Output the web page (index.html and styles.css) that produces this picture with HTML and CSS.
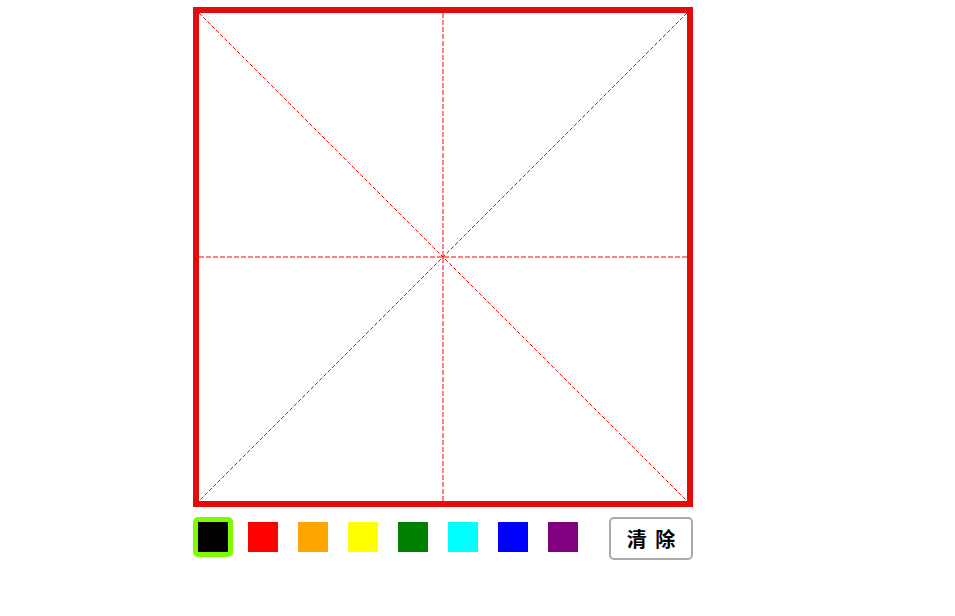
FILE: index.html
```html
<!DOCTYPE html>
<html lang="zh">
<head>
<meta charset="utf-8">
<title>田字格</title>
<link rel="stylesheet" href="styles.css">
</head>
<body>
<div class="app">
  <div class="board">
    <svg class="grid" width="488" height="488" viewBox="0 0 488 488">
      <line x1="0" y1="0" x2="488" y2="488" class="diag"/>
      <line x1="488" y1="0" x2="0" y2="488" class="diag"/>
      <line x1="0" y1="244" x2="488" y2="244" class="mid"/>
      <line x1="244" y1="0" x2="244" y2="488" class="mid"/>
    </svg>
  </div>
  <div class="toolbar">
    <div class="swatches">
      <span class="swatch active"><i class="c-black"></i></span>
      <span class="swatch"><i class="c-red"></i></span>
      <span class="swatch"><i class="c-orange"></i></span>
      <span class="swatch"><i class="c-yellow"></i></span>
      <span class="swatch"><i class="c-green"></i></span>
      <span class="swatch"><i class="c-cyan"></i></span>
      <span class="swatch"><i class="c-blue"></i></span>
      <span class="swatch"><i class="c-purple"></i></span>
    </div>
    <button class="clear">清 除</button>
  </div>
</div>
</body>
</html>
```
FILE: styles.css
```css
html, body {
  margin: 0;
  padding: 0;
  background: #fff;
}
.app {
  padding: 7px 0 0 193px;
  font-family: "Noto Sans CJK SC", "Noto Sans", sans-serif;
}
.board {
  width: 488px;
  height: 488px;
  border: 6px solid #e60b0b;
}
.grid {
  display: block;
}
.diag {
  stroke: #f00;
  stroke-width: 1;
  stroke-dasharray: 4 2;
  fill: none;
}
.mid {
  stroke: #f00;
  stroke-width: 1;
  stroke-dasharray: 5 2;
  fill: none;
}
.toolbar {
  display: flex;
  align-items: flex-start;
  width: 500px;
  margin-top: 10px;
}
.swatches {
  display: flex;
  gap: 10px;
}
.swatch {
  display: block;
  width: 30px;
  height: 30px;
  border: 5px solid transparent;
  border-radius: 5px;
}
.swatch.active {
  border-color: #7cfc00;
}
.swatch i {
  display: block;
  width: 30px;
  height: 30px;
}
.c-black { background: #000; }
.c-red { background: #f00; }
.c-orange { background: #ffa500; }
.c-yellow { background: #ff0; }
.c-green { background: #008000; }
.c-cyan { background: #0ff; }
.c-blue { background: #00f; }
.c-purple { background: #800080; }
.clear {
  margin-left: auto;
  width: 84px;
  height: 43px;
  padding: 0;
  background: #fff;
  border: 2px solid #aaa;
  border-radius: 5px;
  font-family: "Noto Sans CJK SC", sans-serif;
  font-size: 20px;
  font-weight: bold;
  letter-spacing: 2px;
  text-indent: 2px;
  color: #000;
  line-height: 1;
}
```
